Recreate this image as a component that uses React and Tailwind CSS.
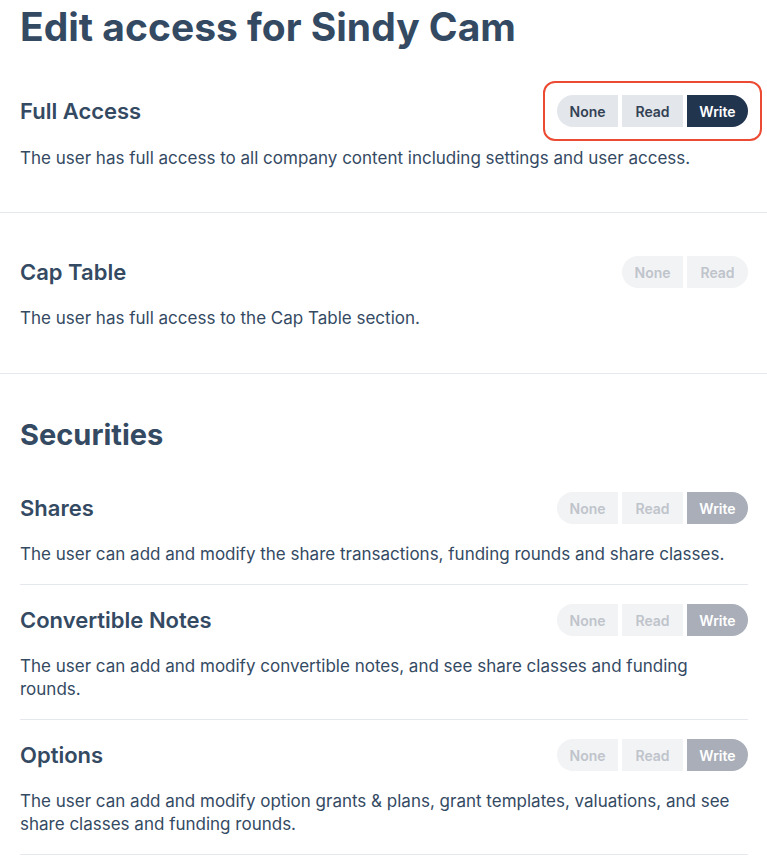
import React from "react";

const FONT = { fontFamily: "Inter, 'Noto Sans', sans-serif" };

function Seg({ options, value, disabled }) {
  return (
    <div className="flex gap-1">
      {options.map((o, i) => {
        const first = i === 0;
        const last = i === options.length - 1;
        const active = o === value;
        let cls = "h-8 w-[61px] flex items-center justify-center text-[14px] font-semibold ";
        if (first) cls += "rounded-l-full ";
        if (last) cls += "rounded-r-full ";
        if (disabled) {
          cls += active ? "bg-[#a9aeb8] text-white" : "bg-[#f2f3f5] text-[#bfc4cb]";
        } else {
          cls += active ? "bg-[#22354f] text-white" : "bg-[#e3e6ea] text-[#334155]";
        }
        return (
          <div key={o} className={cls}>
            {o}
          </div>
        );
      })}
    </div>
  );
}

function Row({ title, options, value, disabled, highlight }) {
  return (
    <div className="flex items-center justify-between h-8">
      <h3 className="text-[22px] font-semibold text-[#344a63] leading-8">{title}</h3>
      {highlight ? (
        <div className="relative">
          <div className="absolute -left-[14px] -right-[14px] -top-[14px] -bottom-[14px] rounded-[12px] border-2 border-[#ec4a32]" />
          <Seg options={options} value={value} disabled={disabled} />
        </div>
      ) : (
        <Seg options={options} value={value} disabled={disabled} />
      )}
    </div>
  );
}

export default function App() {
  return (
    <div className="bg-white w-[767px] min-h-[858px] text-[#344a63]" style={FONT}>
      <div className="pl-5 pr-[19px]">
        <h1 className="text-[39px] font-bold leading-[54px] text-[#344a63]">Edit access for Sindy Cam</h1>
      </div>
      <section className="pl-5 pr-[19px] pt-[41px] pb-[42px] border-b border-[#e5e8ec]">
        <Row title="Full Access" options={["None", "Read", "Write"]} value="Write" highlight />
        <p className="mt-[19px] text-[17px] leading-6">
          The user has full access to all company content including settings and user access.
        </p>
      </section>
      <section className="pl-5 pr-[19px] pt-[43px] pb-[43px] border-b border-[#e5e8ec]">
        <Row title="Cap Table" options={["None", "Read"]} value="" disabled />
        <p className="mt-[18px] text-[17px] leading-6">The user has full access to the Cap Table section.</p>
      </section>
      <div className="pl-5 pr-[19px]">
        <h2 className="pt-[43px] text-[29px] font-bold leading-9">Securities</h2>
        <div className="pt-[39px]">
          {[
            {
              t: "Shares",
              d: "The user can add and modify the share transactions, funding rounds and share classes.",
            },
            {
              t: "Convertible Notes",
              d: "The user can add and modify convertible notes, and see share classes and funding rounds.",
            },
            {
              t: "Options",
              d: "The user can add and modify option grants & plans, grant templates, valuations, and see share classes and funding rounds.",
            },
          ].map((s, i) => (
            <div key={s.t} className={"border-b border-[#e5e8ec] pb-[18px] " + (i === 0 ? "" : "pt-[19px]")}>
              <Row title={s.t} options={["None", "Read", "Write"]} value="Write" disabled />
              <p className="mt-[19px] text-[17px] leading-[23px]">{s.d}</p>
            </div>
          ))}
        </div>
      </div>
    </div>
  );
}
